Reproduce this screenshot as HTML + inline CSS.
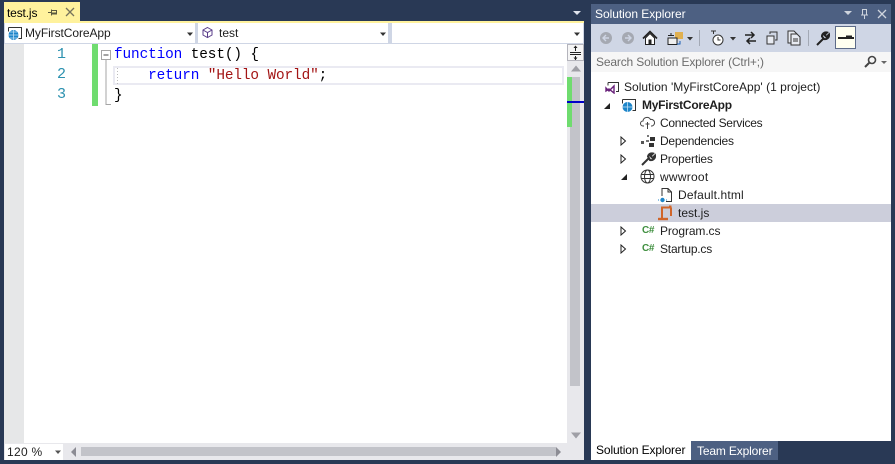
<!DOCTYPE html>
<html><head><meta charset="utf-8"><style>
html,body{margin:0;padding:0}
body{width:895px;height:464px;background:#293955;position:relative;overflow:hidden;font-family:"Liberation Sans",sans-serif;font-size:12px;color:#1e1e1e}
div,span.a,svg{position:absolute}
.t{white-space:nowrap;line-height:16px}
.c{font-family:"Liberation Mono",monospace;font-size:14.4px;line-height:20px;white-space:pre;color:#000;letter-spacing:-.11px}
.n{font-family:"Liberation Mono",monospace;font-size:15px;line-height:20px;color:#2b91af;left:57px}
</style></head><body>
<!-- tab -->
<div style="left:4px;top:2px;width:76px;height:19px;background:#fff29d"></div>
<div class="t" style="left:7px;top:5px;color:#000;letter-spacing:-.15px">test.js</div>
<svg style="left:46px;top:6px" width="12" height="12"><path d="M2 6.500h3M5.500 3.500v6M5.500 4.500h5v3.500h-5M5.500 7h5" stroke="#5a5a40" fill="none"/></svg>
<svg style="left:64px;top:6px" width="12" height="12"><path d="M2 2l8 8M10 2l-8 8" stroke="#77745c" stroke-width="1.300" fill="none"/></svg>
<svg style="left:572px;top:10px" width="10" height="6"><path d="M1 1h8l-4 4z" fill="#dfe3ec"/></svg>
<div style="left:4px;top:21px;width:580px;height:2px;background:#fff29d"></div>
<!-- nav bar -->
<div style="left:4px;top:23px;width:580px;height:21px;background:#cfd6e5"></div>
<div style="left:5px;top:23px;width:190px;height:20px;background:#fff"></div>
<div style="left:198px;top:23px;width:190px;height:20px;background:#fff"></div>
<div style="left:392px;top:23px;width:191px;height:20px;background:#fff"></div>
<svg style="left:7px;top:26px" width="16" height="15"><path d="M1.500 1.500h13v11h-3" stroke="#333" fill="none"/><path d="M1.500 1.500v4" stroke="#333" fill="none"/><circle cx="6.500" cy="9" r="5" fill="#1d85c9"/><path d="M1.500 9h10M6.500 4v10M3 6h7M3 12h7" stroke="#bfe0f5" stroke-width=".8" fill="none"/></svg>
<div class="t" style="left:25px;top:25px;color:#1e1e1e;letter-spacing:-.08px">MyFirstCoreApp</div>
<svg style="left:186px;top:32px" width="8" height="5"><path d="M1 .5h6l-3 3.500z" fill="#333"/></svg>
<svg style="left:201px;top:26px" width="13" height="13"><path d="M6.500 1.500l4.500 2.500v5l-4.500 2.500-4.500-2.500v-5zM2 4l4.500 2.500 4.500-2.500M6.500 6.500v5" stroke="#5a3d8a" fill="none" stroke-width="1"/></svg>
<div class="t" style="left:219px;top:25px">test</div>
<svg style="left:379px;top:32px" width="8" height="5"><path d="M1 .5h6l-3 3.500z" fill="#333"/></svg>
<svg style="left:573px;top:32px" width="8" height="5"><path d="M1 .5h6l-3 3.500z" fill="#333"/></svg>
<!-- editor -->
<div style="left:4px;top:44px;width:580px;height:416px;background:#fff"></div>
<div style="left:4px;top:44px;width:20px;height:399px;background:#e6e7e8"></div>
<div class="n" style="top:45px">1</div><div class="n" style="top:65px">2</div><div class="n" style="top:85px">3</div>
<div style="left:92px;top:44px;width:6px;height:62px;background:#6fdc6f"></div>
<!-- current line -->
<div style="left:113px;top:66px;width:451px;height:19px;box-sizing:border-box;border:2px solid #eaeaf2;border-right-width:2px"></div>
<!-- outline -->
<svg style="left:100px;top:48px" width="14" height="60"><rect x="1.500" y="2.500" width="9" height="9" fill="#fff" stroke="#a5a5a5"/><path d="M3.500 7h5" stroke="#444"/><path d="M6 12v44.500h5" stroke="#a5a5a5" fill="none"/></svg>
<svg style="left:116px;top:68px" width="4" height="16"><path d="M1.500 0v16" stroke="#bbb" stroke-dasharray="1 2"/></svg>
<div class="c" style="left:114px;top:45px"><span style="color:#0000ff">function</span> test() {</div>
<div class="c" style="left:114px;top:66px">    <span style="color:#0000ff">return</span> <span style="color:#a31515">"Hello World"</span>;</div>
<div class="c" style="left:114px;top:86px">}</div>
<!-- right scrollbar -->
<div style="left:567px;top:44px;width:17px;height:399px;background:#e8e8ec"></div>
<div style="left:567px;top:44px;width:17px;height:17px;box-sizing:border-box;background:#f5f5f5;border:1px solid #b4b4bc"></div>
<svg style="left:567px;top:45px" width="17" height="16"><path d="M3 7.500h11M3 9.500h11M8.500 1v5M8.500 11v4" stroke="#222" fill="none"/><path d="M6.500 3l2-2.500 2 2.500zM6.500 12.500l2 2.500 2-2.500z" fill="#222"/></svg>
<svg style="left:569px;top:64px" width="14" height="9"><path d="M2 7.500l5-6 5 6z" fill="#9f9fa6"/></svg>
<div style="left:570px;top:77px;width:10px;height:309px;background:#c2c3c9"></div>
<div style="left:567px;top:77px;width:5px;height:50px;background:#6fdc6f"></div>
<div style="left:567px;top:101px;width:17px;height:2px;background:#0000c8"></div>
<svg style="left:569px;top:431px" width="14" height="9"><path d="M2 1.500l5 6 5-6z" fill="#9f9fa6"/></svg>
<!-- bottom -->
<div style="left:4px;top:443px;width:580px;height:17px;background:#e8e8ec"></div>
<div style="left:5px;top:444px;width:58px;height:16px;background:#fff"></div>
<div class="t" style="left:7px;top:444px;color:#222;letter-spacing:.3px">120 %</div>
<svg style="left:54px;top:450px" width="8" height="5"><path d="M1 .5h6l-3 3.500z" fill="#555"/></svg>
<svg style="left:70px;top:446px" width="8" height="12"><path d="M6 1v10l-5-5z" fill="#8c8c94"/></svg>
<div style="left:81px;top:447px;width:475px;height:9px;background:#c2c3c9"></div>
<svg style="left:554px;top:446px" width="8" height="12"><path d="M2 1v10l5-5z" fill="#8c8c94"/></svg>
<!-- solution explorer -->
<div style="left:591px;top:4px;width:300px;height:20px;background:#4d6082"></div>
<div class="t" style="left:595px;top:6px;color:#fff;letter-spacing:-.05px">Solution Explorer</div>
<svg style="left:843px;top:8px" width="48" height="12"><path d="M1 3h8l-4 4z" fill="#ced4dd"/><path d="M18 7h7M19.500 7V1.500h4V7M21.500 7v4" stroke="#ced4dd" fill="none"/><path d="M35 2l8 8M43 2l-8 8" stroke="#ced4dd" stroke-width="1.300" fill="none"/></svg>
<div style="left:591px;top:24px;width:300px;height:28px;background:#cfd6e5"></div>
<svg style="left:596px;top:24px" width="295" height="28" fill="none">
<circle cx="10" cy="14" r="6" fill="#a5a9b2"/><path d="M13 14H7.500M10 11l-3 3 3 3" stroke="#cfd6e5" stroke-width="1.400"/>
<circle cx="32" cy="14" r="6" fill="#a5a9b2"/><path d="M29 14h5.500M32 11l3 3-3 3" stroke="#cfd6e5" stroke-width="1.400"/>
<path d="M47 14.500l7-7 7 7" stroke="#222" stroke-width="1.600"/><path d="M49.500 14v6.500h9V14l-4.500-4.500z" fill="#fff" stroke="#222"/><rect x="52.500" y="15.500" width="3" height="5" fill="#222"/>
<rect x="79" y="8" width="8" height="7" fill="#e0b050"/><rect x="72" y="14" width="9" height="6.500" fill="#efefef" stroke="#222"/><path d="M72 11.500h6M75 9v3" stroke="#222"/><path d="M84 17v3h-3" stroke="#1a5fb4"/>
<path d="M91 13h6l-3 3.500z" fill="#333"/>
<path d="M103.500 6v16" stroke="#a3a9b5"/>
<path d="M115 7h5M117.500 7v3" stroke="#333"/><circle cx="122" cy="16" r="5" fill="#fff" stroke="#333"/><path d="M122 13v3h2.500" stroke="#333"/>
<path d="M134 13h6l-3 3.500z" fill="#333"/>
<path d="M149 11h9M155 8l3 3-3 3M160 17h-9M154 14l-3 3 3 3" stroke="#222" stroke-width="1.500"/>
<rect x="171" y="12" width="7" height="8" stroke="#333" fill="#e8ebf2"/><path d="M174 10V8h7v8h-2" stroke="#333"/>
<path d="M192 7h6l3 3v9h-9z" stroke="#333" fill="#e8ebf2"/><path d="M195 10h6l3 3v8h-9z" stroke="#333" fill="#e8ebf2"/><path d="M197 15h5M197 17h5" stroke="#333"/>
<path d="M212.500 6v16" stroke="#a3a9b5"/>
<path d="M221 21l7-7M226 12.500a4 4 0 0 1 5-4l-2.500 2.500 2 2 2.500-2.500a4 4 0 0 1-5 4.500z" stroke="#222" stroke-width="2"/>
</svg>
<div style="left:835px;top:26px;width:21px;height:23px;box-sizing:border-box;background:#fffff0;border:1px solid #5d6b88"></div>
<svg style="left:838px;top:33px" width="16" height="8"><path d="M0 5h16M8 3.500h6" stroke="#222" stroke-width="2" fill="none"/></svg>
<div style="left:591px;top:52px;width:300px;height:20px;background:#f6f6f6"></div>
<div class="t" style="left:596px;top:54px;color:#6d6d6d;letter-spacing:-.16px">Search Solution Explorer (Ctrl+;)</div>
<svg style="left:862px;top:55px" width="26" height="14" fill="none"><circle cx="10" cy="5" r="3.500" stroke="#444" stroke-width="1.600"/><path d="M7.500 7.500L3 12" stroke="#444" stroke-width="2"/><path d="M19 6h6l-3 3z" fill="#666"/></svg>
<div style="left:591px;top:72px;width:300px;height:369px;background:#fff"></div>
<div style="left:591px;top:204px;width:300px;height:18px;background:#cccedb"></div>
<!-- tree -->
<svg style="left:604px;top:80px" width="16" height="14" fill="none"><path d="M4 2.500h10.500v9H12" stroke="#333"/><path d="M4 2.500v3" stroke="#333"/><path d="M2 8l3 3 5-5v7l-5-4-3 2z" stroke="#68217a" stroke-width="1.400"/></svg>
<div class="t" style="left:624px;top:79px;letter-spacing:.03px">Solution 'MyFirstCoreApp' (1 project)</div>
<svg style="left:603px;top:102px" width="8" height="8"><path d="M7 1v6H1z" fill="#222"/></svg>
<svg style="left:621px;top:98px" width="16" height="15"><path d="M1.500 1.500h13v11h-3M1.500 1.500v4" stroke="#333" fill="none"/><circle cx="6.500" cy="9" r="5" fill="#1d85c9"/><path d="M1.500 9h10M6.500 4v10" stroke="#bfe0f5" stroke-width=".8"/></svg>
<div class="t" style="left:642px;top:97px;font-weight:bold;letter-spacing:-.25px">MyFirstCoreApp</div>
<svg style="left:640px;top:116px" width="16" height="14" fill="none"><path d="M4 10H3a2.500 2.500 0 0 1 0-5 4 4 0 0 1 7.500-1.500A3 3 0 0 1 12 10h-1" stroke="#444"/><path d="M7.500 6v7M5.500 8h4" stroke="#444"/></svg>
<div class="t" style="left:660px;top:115px;letter-spacing:-.28px">Connected Services</div>
<svg style="left:620px;top:136px" width="7" height="10"><path d="M1 1l4.500 4L1 9z" fill="#fff" stroke="#222"/></svg>
<svg style="left:640px;top:134px" width="16" height="14"><rect x="10" y="3" width="5" height="4" fill="#333"/><rect x="7" y="1" width="2" height="2" fill="#777"/><rect x="1" y="7" width="3" height="3" fill="#555"/><rect x="6" y="6" width="3" height="2" fill="#777"/><rect x="9" y="9" width="5" height="4" fill="#333"/></svg>
<div class="t" style="left:660px;top:133px;letter-spacing:-.25px">Dependencies</div>
<svg style="left:620px;top:154px" width="7" height="10"><path d="M1 1l4.500 4L1 9z" fill="#fff" stroke="#222"/></svg>
<svg style="left:640px;top:152px" width="16" height="15" fill="none"><path d="M2 13l7-7M8 4.500a4 4 0 0 1 5-3l-2.500 2.500 2 2L15 3.500a4 4 0 0 1-5 4.500z" stroke="#333" stroke-width="2"/></svg>
<div class="t" style="left:660px;top:151px;letter-spacing:-.2px">Properties</div>
<svg style="left:620px;top:173px" width="8" height="8"><path d="M7 1v6H1z" fill="#222"/></svg>
<svg style="left:640px;top:169px" width="15" height="15" fill="none" stroke="#333"><circle cx="7.500" cy="7.500" r="6.500"/><ellipse cx="7.500" cy="7.500" rx="3" ry="6.500"/><path d="M1 5.500h13M1 9.500h13"/></svg>
<div class="t" style="left:660px;top:169px;letter-spacing:.25px">wwwroot</div>
<svg style="left:658px;top:187px" width="15" height="17" fill="none"><path d="M4 9V1.500h6l3.500 3.500v9.500H8" stroke="#333"/><path d="M10 1.500V5h3.500" stroke="#333"/><circle cx="4.500" cy="13" r="2.200" fill="#1d85c9"/><path d="M1 13l-1 0M8 13l1 0" stroke="#1d85c9"/></svg>
<div class="t" style="left:678px;top:187px;letter-spacing:.15px">Default.html</div>
<svg style="left:657px;top:205px" width="16" height="16" fill="none"><path d="M5 13V2.500h9M14 2.500V11" stroke="#d0652a" stroke-width="2"/><path d="M1 14h10" stroke="#d0652a" stroke-width="2.400"/><path d="M12 1.500h2.500" stroke="#d0652a" stroke-width="2"/></svg>
<div class="t" style="left:678px;top:205px">test.js</div>
<svg style="left:620px;top:226px" width="7" height="10"><path d="M1 1l4.500 4L1 9z" fill="#fff" stroke="#222"/></svg>
<div class="t" style="left:642px;top:223px;font-size:10px;font-weight:bold;color:#3f8f3f;letter-spacing:-.3px">C#</div>
<div class="t" style="left:660px;top:223px;letter-spacing:-.1px">Program.cs</div>
<svg style="left:620px;top:244px" width="7" height="10"><path d="M1 1l4.500 4L1 9z" fill="#fff" stroke="#222"/></svg>
<div class="t" style="left:642px;top:241px;font-size:10px;font-weight:bold;color:#3f8f3f;letter-spacing:-.3px">C#</div>
<div class="t" style="left:660px;top:241px;letter-spacing:-.2px">Startup.cs</div>
<!-- bottom tabs -->
<div style="left:591px;top:441px;width:100px;height:19px;background:#fff"></div>
<div class="t" style="left:596px;top:442px;color:#000;letter-spacing:-.12px">Solution Explorer</div>
<div style="left:691px;top:441px;width:87px;height:19px;background:#4d6082"></div>
<div class="t" style="left:697px;top:443px;color:#fff;letter-spacing:-.15px">Team Explorer</div>
</body></html>
